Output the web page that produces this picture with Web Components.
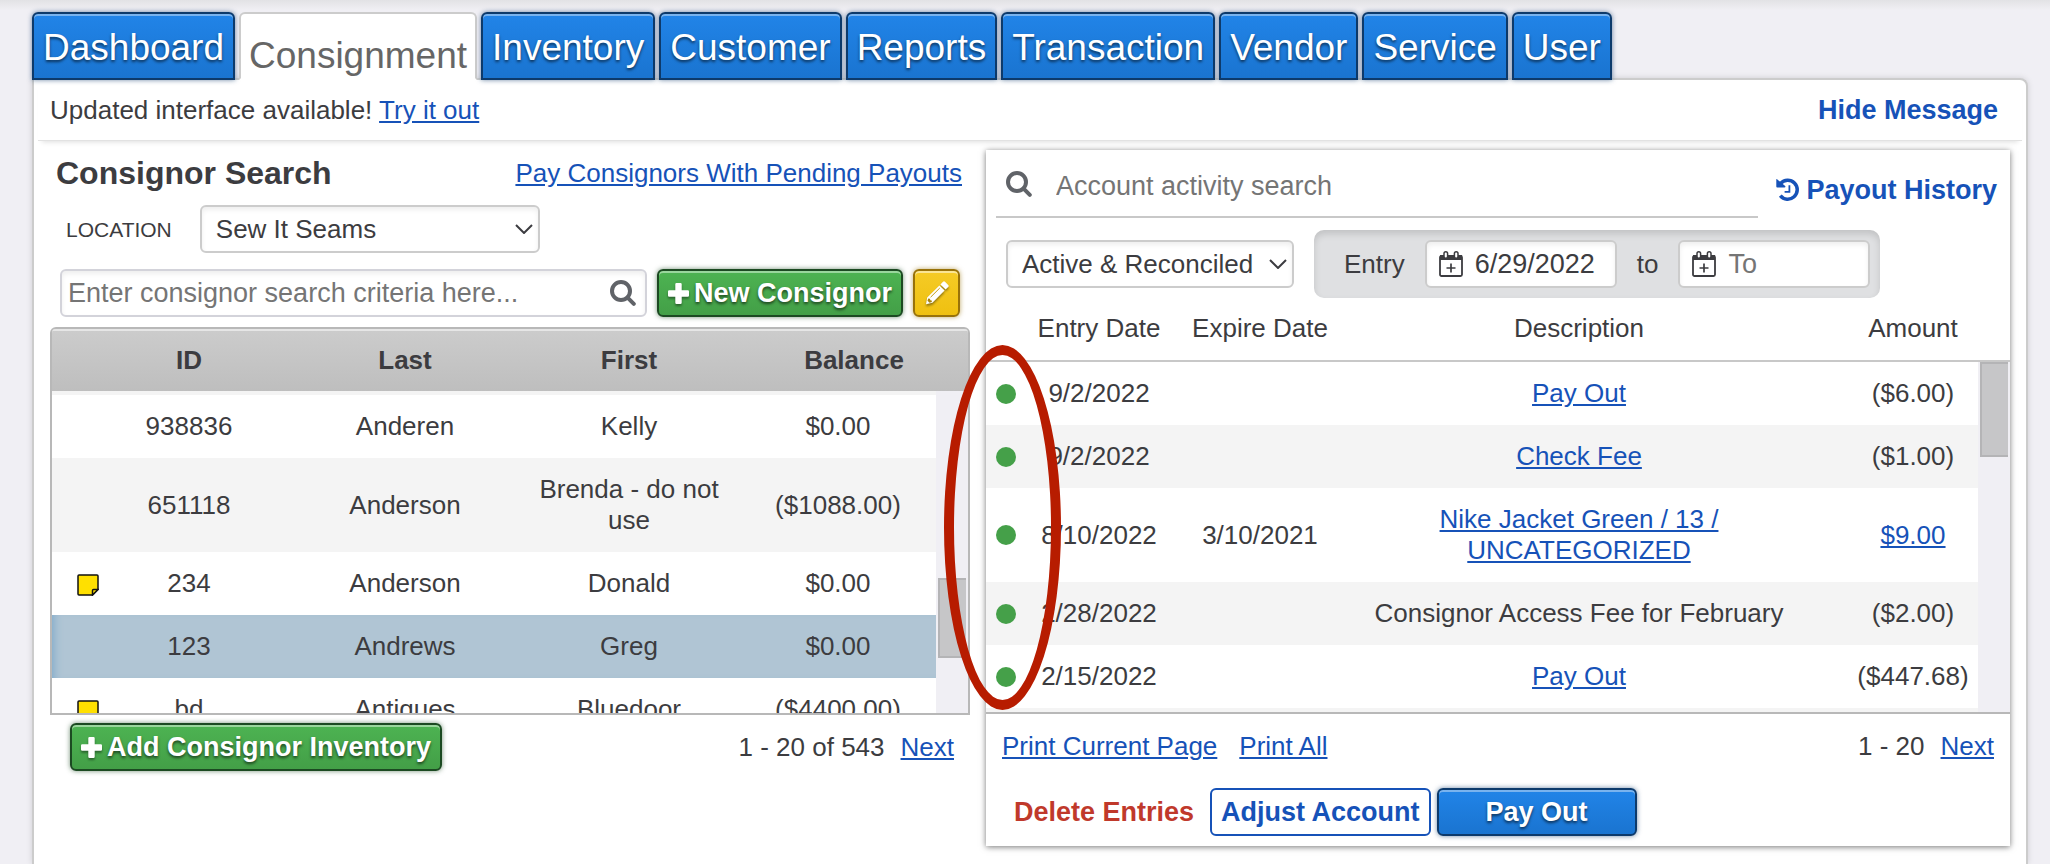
<!DOCTYPE html>
<html lang="en">
<head>
<meta charset="utf-8">
<title>Consignment</title>
<style>
  body {
    margin: 0;
    background: #f0eff4;
    color: #3c3c40;
    font: 26px/31px Arial, "Liberation Sans", sans-serif;
    --link: #1652b8;
    --line: #c8c8c8;
  }
</style>
</head>
<body>
<consignment-page></consignment-page>

<script>
const ICONS = {
  search: '<svg viewBox="0 0 26 26" width="26" height="26"><g fill="none" stroke="#606368"><circle cx="11" cy="11" r="9" stroke-width="4"/><path d="M17.6 17.6 23.8 23.8" stroke-width="4" stroke-linecap="round"/></g></svg>',
  plus: '<svg viewBox="0 0 21 21" width="21" height="21"><path fill="currentColor" d="M8.5 0h4a1.2 1.2 0 0 1 1.2 1.2V7.3h6.1A1.2 1.2 0 0 1 21 8.500v4a1.2 1.2 0 0 1-1.2 1.2H13.7v6.1A1.2 1.2 0 0 1 12.500 21h-4a1.2 1.2 0 0 1-1.2-1.2V13.7H1.2A1.2 1.2 0 0 1 0 12.500v-4A1.2 1.2 0 0 1 1.2 7.3h6.1V1.2A1.2 1.2 0 0 1 8.500 0z"/></svg>',
  pencil: '<svg viewBox="0 0 24 24" width="24" height="24"><path fill="#fff" d="M18 .8q1-1 2 0l3.2 3.2q1 1 0 2L20.600 8.600 15.400 3.400zM14.400 4.400l5.200 5.200L7.400 21.800 1 23.200 2.200 16.600z"/><path fill="none" stroke="#c39a10" stroke-width="1" d="M5.600 16.200 14.800 7"/><path fill="#a8830c" d="M3.2 17.600l1.800.2.300 1.500 1.400.3.200 1.500-2.400.7-2-2z"/></svg>',
  history: '<svg viewBox="0 0 24 24" width="24" height="24"><path fill="none" stroke="currentColor" stroke-width="3.500" d="M4.600 5.400A9.500 9.500 0 1 1 4.300 17.600"/><path fill="currentColor" d="M.3 1.600Q.3.600 1.100 1.300L9.200 8q.8 1.400-.8 1.400H1.200Q.3 9.400.3 8.500z"/><path fill="none" stroke="currentColor" stroke-width="1.800" d="M13.400 7.200v6.600H8.600"/></svg>',
  calendar: '<svg viewBox="0 0 24 26" width="24" height="26"><rect x="1" y="5" width="22" height="20" rx="1.500" fill="#fff" stroke="#3c3c40" stroke-width="1.800"/><path fill="#3c3c40" d="M1 4h22v5H1z"/><g fill="#fff" stroke="#3c3c40" stroke-width="1.500"><rect x="5" y=".8" width="3.600" height="6.400" rx="1.800"/><rect x="15.400" y=".8" width="3.600" height="6.400" rx="1.800"/></g><path stroke="#3c3c40" stroke-width="1.700" d="M12 12.500v9M7.500 17h9"/></svg>',
  note: '<svg viewBox="0 0 22 22" width="22" height="22"><path fill="#ffe000" stroke="#111" stroke-width="1.500" d="M1 2q0-1 1-1h18q1 0 1 1v13.500L15.500 21H2q-1 0-1-1z"/><path fill="#ffe000" stroke="#111" stroke-width="1.500" d="M21 15.500h-4.500q-1 0-1 1V21z"/></svg>',
  chevron: '<svg viewBox="0 0 18 10" width="18" height="10"><path fill="none" stroke="#3c3c40" stroke-width="2" d="M1 1l8 8 8-8"/></svg>'
};

const BASE_CSS = `
  *{box-sizing:border-box}
  a{color:var(--link)}
  button,input,select{font:inherit;color:inherit;margin:0}
  svg{display:block;flex:none}`;

// Registers an element; html is a string or a function of the element.
function define(name, css, html) {
  customElements.define(name, class extends HTMLElement {
    connectedCallback() {
      if (this.shadowRoot) return;
      this.attachShadow({ mode: 'open' }).innerHTML =
        `<style>${BASE_CSS}${css}</style>${typeof html === 'function' ? html(this) : html}`;
    }
  });
}

define('ui-icon', ':host{display:block;flex:none}', el => ICONS[el.getAttribute('name')]);

define('nav-tab', `
  :host{display:block}
  a{display:block;height:68px;padding:13px 9px 0;border:2px solid #0d3a6b;border-radius:6px 6px 0 0;
    background:linear-gradient(#2184e8,#1a74d0);box-shadow:inset 0 2px 0 #79b3ee,0 0 5px #0d3a6b99;
    color:#fff;font-size:37px;line-height:42px;text-decoration:none;text-shadow:0 2px 3px #0009}
  :host([active]) a{padding:21px 8px 0;border-color:#ccc #ccc #fff;background:#fff;box-shadow:none;color:#666;text-shadow:none}`,
  '<a href="#"><slot></slot></a>');

define('action-button', `
  :host{display:block;flex:none;--edge:#1c4a22;--top:#4db352;--bottom:#439f47;--shine:#9ad69d}
  :host([tone=blue]){--edge:#0d3a6b;--top:#2184e8;--bottom:#1a74d0;--shine:#79b3ee}
  :host([tone=yellow]){--edge:#987209;--top:#f5cb26;--bottom:#efc010;--shine:#fae594}
  button{display:flex;align-items:center;justify-content:center;gap:5px;width:100%;height:48px;padding:0 9px;
    border:2px solid var(--edge);border-radius:6px;background:linear-gradient(var(--top),var(--bottom));
    box-shadow:inset 0 2px 0 var(--shine),0 0 5px color-mix(in srgb,var(--edge) 60%,transparent);
    color:#fff;font-size:27px;font-weight:bold;text-shadow:0 2px 3px #0009;white-space:nowrap}
  svg{filter:drop-shadow(0 2px 1px #0006)}
  :host([tone=outline]) button{background:#fff;border-color:var(--link);box-shadow:none;color:var(--link);text-shadow:none}
  :host([tone=danger]) button{padding:0;background:none;border-color:transparent;box-shadow:none;color:#c0392b;text-shadow:none}
  :host([tone=yellow]) button{padding:0}`,
  el => `<button type="button" ${el.hasAttribute('label') ? `aria-label="${el.getAttribute('label')}"` : ''}>${ICONS[el.getAttribute('icon')] || ''}<slot></slot></button>`);

define('select-box', `
  :host{display:flex;align-items:center;gap:28px}
  label{font-size:21px}
  .box{display:grid;align-items:center;width:var(--box-width)}
  select,svg{grid-area:1/1}
  select{appearance:none;width:100%;height:48px;padding:0 36px 0 14px;border:2px solid #ccc;border-radius:6px;
    background:#fff;box-shadow:inset 0 3px 5px #0001}
  svg{justify-self:end;margin-right:7px;pointer-events:none}`,
  el => {
    const label = el.getAttribute('label');
    return `${label ? `<label for="field">${label}</label>` : ''}
      <div class="box"><select id="field" ${label ? '' : `aria-label="${el.getAttribute('name')}"`}><option>${el.innerHTML}</option></select>${ICONS.chevron}</div>`;
  });

define('date-box', `
  :host{display:flex;align-items:center;gap:12px;height:48px;padding:0 12px;border:2px solid #ccc;border-radius:6px;
    background:#fff;box-shadow:inset 0 3px 5px #0001;box-sizing:border-box}
  input{flex:1;min-width:0;height:40px;padding:0;border:0;background:none;font-size:27px;outline:0}
  input::placeholder{color:#757575}`,
  el => `${ICONS.calendar}<input type="text" aria-label="${el.getAttribute('label')}" value="${el.getAttribute('value') || ''}" placeholder="${el.getAttribute('placeholder') || ''}">`);

define('message-bar', `
  :host{display:flex;justify-content:space-between;align-items:center;height:61px;margin:0 4px;padding:0 24px 0 12px;
    box-sizing:border-box;border-bottom:1px solid #e2e2e2;box-shadow:0 5px 5px -4px #0002}
  .hide{font-size:27px;font-weight:bold;text-decoration:none}`,
  '<span>Updated interface available! <a href="#">Try it out</a></span><a class="hide" href="#">Hide Message</a>');

// Both tables share one frame: a full-width head, then the rows beside a scroll track.
const TABLE_CSS = `
  :host{display:block}
  table{display:grid;grid-template-columns:1fr 32px}
  thead{display:block;grid-column:1/-1}
  tbody,caption{display:block}
  tr{display:grid;align-items:center}
  th,td{padding:16px 0;text-align:center}
  tbody tr:nth-child(even){background:#f4f4f4}
  caption{background:#f0eff4}
  .thumb{background:#c6c6c8;border:2px solid #b4b4b6;border-right:0}`;

const headRow = names => `<thead><tr>${names.map(n => `<th>${n}</th>`).join('')}</tr></thead>`;
const bodyRow = (cells, cls = '') => `<tr class="${cls}">${cells.map(c => `<td>${c}</td>`).join('')}</tr>`;
const TRACK = '<caption><div class="thumb"></div></caption>';

define('consignor-table', `${TABLE_CSS}
  table{border:2px solid #b8b8b8;border-radius:6px 6px 0 0;overflow:hidden}
  thead{height:62px;background:linear-gradient(#ccc,#bebebe);box-shadow:inset 0 2px 0 #e6e6e6}
  tr{grid-template-columns:60px 180px 226px 1fr 196px}
  thead tr{grid-template-columns:60px 180px 226px 1fr 228px}
  th:nth-child(2),td:nth-child(2){padding-right:26px}
  td:nth-child(4){padding-left:20px;padding-right:20px}
  tbody{border-top:4px solid #f4f4f4;height:322px;overflow:hidden}
  tbody tr.selected{background:#b0c5d4;box-shadow:inset 8px 0 8px -6px #7faacb}
  td:first-child{padding:2px 0 0 25px}
  .thumb{height:80px;margin:187px 2px 0}`,
  `<table>${headRow(['', 'ID', 'Last', 'First', 'Balance'])}<tbody>
    ${bodyRow(['', '938836', 'Anderen', 'Kelly', '$0.00'])}
    ${bodyRow(['', '651118', 'Anderson', 'Brenda - do not use', '($1088.00)'])}
    ${bodyRow([ICONS.note, '234', 'Anderson', 'Donald', '$0.00'])}
    ${bodyRow(['', '123', 'Andrews', 'Greg', '$0.00'], 'selected')}
    ${bodyRow([ICONS.note, 'bd', 'Antiques', 'Bluedoor', '($4400.00)'])}
  </tbody>${TRACK}</table>`);

const link = text => `<a href="#">${text}</a>`;
const DOT = '<span class="dot"></span>';

define('activity-table', `${TABLE_CSS}
  table{border-bottom:2px solid #b8b8b8}
  thead{border-bottom:2px solid var(--line)}
  th{font-weight:normal;padding-top:15px}
  tr{grid-template-columns:32px 162px 160px 1fr 130px}
  thead tr{padding-right:32px}
  tbody{border-bottom:4px solid #f4f4f4}
  th:nth-child(4),td:nth-child(4){padding-right:30px}
  .dot{display:block;width:20px;height:20px;margin-left:10px;border-radius:50%;background:#45a049}
  .thumb{height:95px;margin:0 2px}`,
  `<table>${headRow(['', 'Entry Date', 'Expire Date', 'Description', 'Amount'])}<tbody>
    ${bodyRow([DOT, '9/2/2022', '', link('Pay Out'), '($6.00)'])}
    ${bodyRow([DOT, '9/2/2022', '', link('Check Fee'), '($1.00)'])}
    ${bodyRow([DOT, '8/10/2022', '3/10/2021', link('Nike Jacket Green / 13 / UNCATEGORIZED'), link('$9.00')])}
    ${bodyRow([DOT, '2/28/2022', '', 'Consignor Access Fee for February', '($2.00)'])}
    ${bodyRow([DOT, '2/15/2022', '', link('Pay Out'), '($447.68)'])}
  </tbody>${TRACK}</table>`);

define('consignor-panel', `
  :host{display:flex;flex-direction:column}
  .title{display:flex;justify-content:space-between;align-items:center;height:46px;margin-bottom:9px;padding:0 8px 0 6px}
  h1{margin:0;font-size:32px;line-height:36px}
  .location{padding-left:16px;--box-width:340px}
  .find{display:flex;gap:10px;margin:16px 10px 10px}
  .box{flex:1;display:flex;align-items:center;height:48px;padding:0 9px 0 6px;border:2px solid #d3d3da;border-radius:6px;box-shadow:inset 0 3px 5px #0001}
  .box input{flex:1;min-width:0;height:40px;padding:0;border:0;background:none;font-size:27px;outline:0}
  .box input::placeholder{color:#757575}
  action-button[tone=yellow]{width:47px}
  .foot{display:flex;justify-content:space-between;align-items:center;padding:8px 16px 0 20px}
  .foot nav{display:flex;gap:16px}`,
  `<div class="title"><h1>Consignor Search</h1><a href="#">Pay Consignors With Pending Payouts</a></div>
   <select-box class="location" label="LOCATION">Sew It Seams</select-box>
   <div class="find"><div class="box"><input type="text" aria-label="Consignor search" placeholder="Enter consignor search criteria here..."><ui-icon name="search"></ui-icon></div>
     <action-button icon="plus">New Consignor</action-button><action-button tone="yellow" icon="pencil" label="Edit consignor"></action-button></div>
   <consignor-table></consignor-table>
   <div class="foot"><action-button icon="plus">Add Consignor Inventory</action-button><nav><span>1 - 20 of 543</span><a href="#">Next</a></nav></div>`);

define('activity-panel', `
  :host{display:block;background:#fff;box-shadow:0 1px 6px #0008}
  .top{display:flex;align-items:center;gap:18px;padding:0 13px 0 10px}
  .search{flex:1;display:flex;align-items:center;gap:24px;height:68px;padding:2px 0 0 10px;border-bottom:2px solid var(--line)}
  .search input{flex:1;min-width:0;height:40px;padding:5px 0 0;border:0;background:none;font-size:27px;outline:0}
  .search input::placeholder{color:#757575}
  .history{display:flex;align-items:center;gap:6px;padding-top:13px;font-size:27px;font-weight:bold;text-decoration:none}
  .history ui-icon{padding-bottom:2px}
  .filters{display:flex;align-items:center;gap:20px;padding:12px 20px 0;--box-width:288px}
  .range{display:flex;align-items:center;gap:20px;height:68px;padding:0 10px 0 30px;border-radius:10px;background:#dfe0e2;box-shadow:inset 0 4px 7px #0002}
  .range date-box{width:192px}
  .pages{display:flex;gap:22px;padding:17px 16px 0}
  .pages div{display:flex;gap:16px;margin-left:auto}
  .actions{display:flex;gap:6px;padding:26px 26px 10px}
  action-button[tone=danger]{margin-right:8px}
  action-button[tone=blue]{width:200px}`,
  `<div class="top"><div class="search"><ui-icon name="search"></ui-icon><input type="text" aria-label="Account activity search" placeholder="Account activity search"></div>
     <a class="history" href="#"><ui-icon name="history"></ui-icon>Payout History</a></div>
   <div class="filters"><select-box name="Status">Active &amp; Reconciled</select-box>
     <div class="range"><span>Entry</span><date-box label="Entry from" value="6/29/2022"></date-box><span>to</span><date-box label="Entry to" placeholder="To"></date-box></div></div>
   <activity-table></activity-table>
   <div class="pages"><a href="#">Print Current Page</a><a href="#">Print All</a><div><span>1 - 20</span><a href="#">Next</a></div></div>
   <div class="actions"><action-button tone="danger">Delete Entries</action-button><action-button tone="outline">Adjust Account</action-button><action-button tone="blue">Pay Out</action-button></div>`);

// Red ring drawn over the status dots.
define('status-marker', `
  :host{position:absolute;left:-42px;top:195px;width:117px;height:365px;box-sizing:border-box;border:10px solid #b71c00;border-radius:50%;pointer-events:none}`, '');

define('consignment-page', `
  :host{display:flex;flex-direction:column;min-height:100vh;padding:12px 22px 0 32px;box-sizing:border-box;
    background:linear-gradient(#e2e2e5,#f0eff4 10px)}
  .tabs{display:flex;gap:4px;position:relative;z-index:1;margin-bottom:-2px}
  main{flex:1;border:2px solid #ccc;border-bottom:0;border-radius:0 8px 0 0;background:#fff;box-shadow:0 0 6px #0002}
  .columns{display:grid;grid-template-columns:115fr 128fr;gap:16px;align-items:start;padding:9px 16px 16px}
  .right{position:relative}`,
  `<nav class="tabs"><nav-tab>Dashboard</nav-tab><nav-tab active>Consignment</nav-tab><nav-tab>Inventory</nav-tab><nav-tab>Customer</nav-tab><nav-tab>Reports</nav-tab><nav-tab>Transaction</nav-tab><nav-tab>Vendor</nav-tab><nav-tab>Service</nav-tab><nav-tab>User</nav-tab></nav>
   <main><message-bar></message-bar>
     <div class="columns"><consignor-panel></consignor-panel><div class="right"><activity-panel></activity-panel><status-marker></status-marker></div></div></main>`);
</script>
</body>
</html>
